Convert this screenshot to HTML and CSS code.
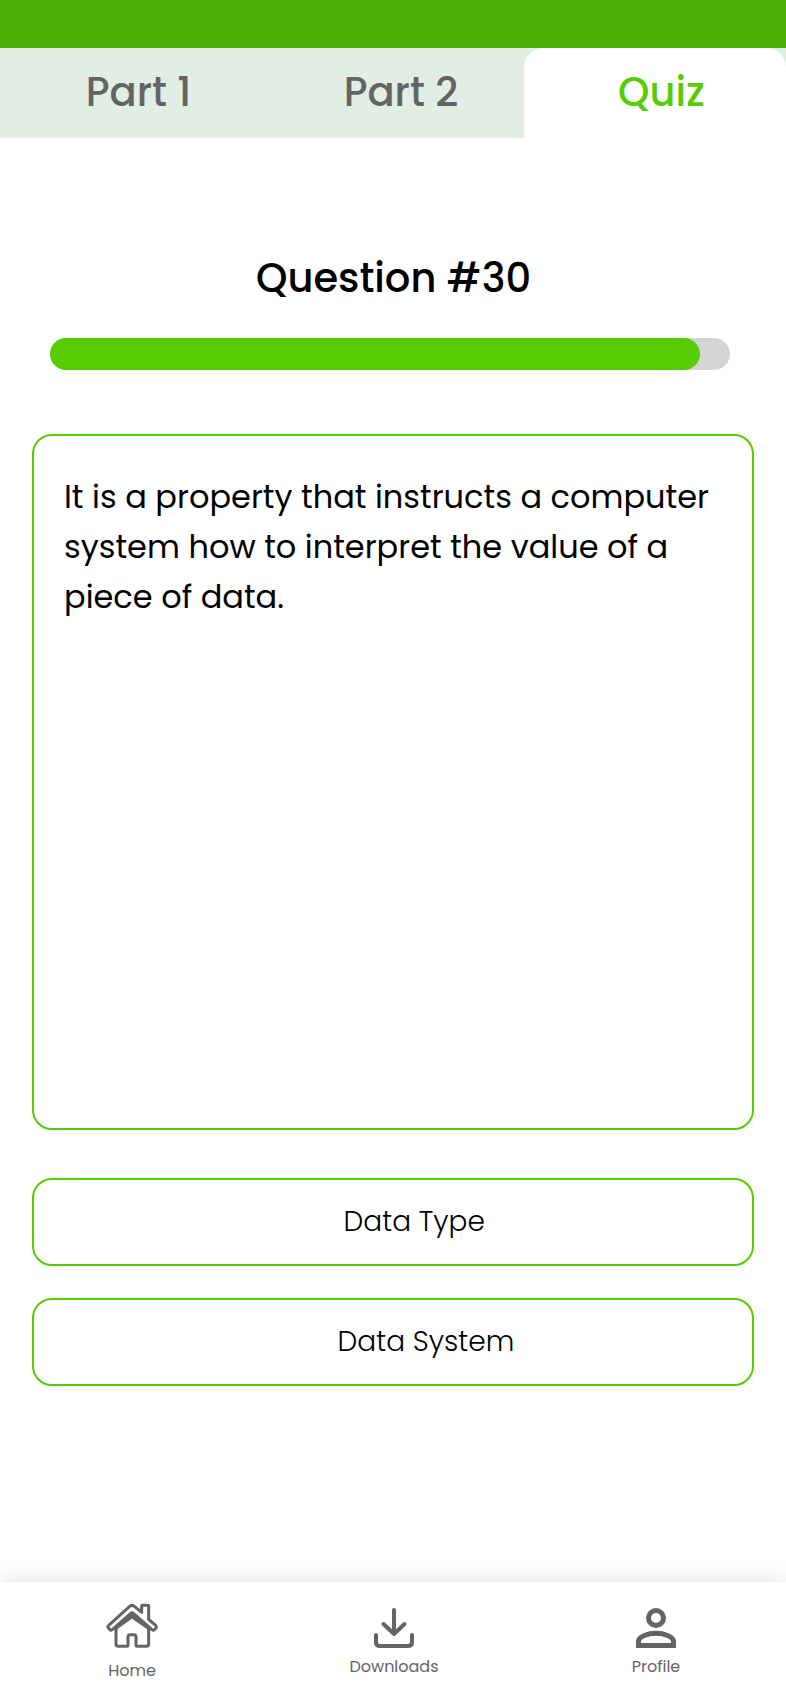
FILE: index.html
```html
<!DOCTYPE html>
<html lang="en">
<head>
<meta charset="utf-8">
<title>Quiz</title>
<link rel="stylesheet" href="styles.css">
</head>
<body>
<div class="status-bar"></div>
<nav class="tabs">
  <a class="tab part1">Part 1</a>
  <a class="tab part2">Part 2</a>
  <a class="tab active">Quiz</a>
</nav>
<main class="content">
  <h1 class="title">Question #30</h1>
  <div class="progress"><div class="progress-fill" style="width: 650px"></div></div>
  <section class="card">
    <p class="question">It is a property that instructs a computer system how to interpret the value of a piece of data.</p>
  </section>
  <div class="options">
    <button class="option type">Data Type</button>
    <button class="option system">Data System</button>
  </div>
</main>
<footer class="bottom-nav">
  <a class="nav-item home">
    <svg class="icon-home" viewBox="48 100 156 136" fill="none" stroke="currentColor" stroke-width="9" stroke-linejoin="round" stroke-linecap="round">
      <path d="M56 167 119 110Q126 104 133 110L155 128V109Q155 107 158 107H173Q176 107 176 109V149L197 167Q201 171 197 176L194 180Q190 183 186 180L130 131Q126 128 122 131L67 180Q63 183 59 179L56 176Q51 171 56 167Z"/>
      <path fill="currentColor" d="M76 177 126 133 177 177 126 141Z"/>
      <path d="M78 178V223Q78 230 86 230H108Q114 230 114 225V201Q114 195 120 195H132Q138 195 138 201V225Q138 230 144 230H168Q176 230 176 223V178"/>
    </svg>
    <span>Home</span>
  </a>
  <a class="nav-item">
    <svg class="icon" viewBox="0 0 40 40" fill="none" stroke="currentColor" stroke-width="4" stroke-linecap="round" stroke-linejoin="round">
      <path d="M20 2V26M9.500 16 20 26 30.500 16M2 27V34Q2 38 6 38H34Q38 38 38 34V27"/>
    </svg>
    <span>Downloads</span>
  </a>
  <a class="nav-item">
    <svg class="icon" viewBox="0 0 40 40" fill="none" stroke="currentColor" stroke-width="5">
      <circle cx="20" cy="10" r="7.500"/>
      <path d="M2.500 37.500V33.500C2.500 28.500 12 25.300 20 25.300S37.500 28.500 37.500 33.500V37.500Z"/>
    </svg>
    <span>Profile</span>
  </a>
</footer>
</body>
</html>
```
FILE: styles.css
```css
* { box-sizing: border-box; }
body {
  margin: 0;
  height: 1702px;
  display: flex;
  flex-direction: column;
  overflow: hidden;
  background: #fff;
  color: #000;
  font-family: Poppins, Inter, sans-serif;
}
.status-bar { height: 48px; background: #4bae04; }
.tabs { display: flex; height: 90px; background: #e2ede3; color: #646464; }
.tab {
  width: 262px;
  text-align: center;
  font-size: 40px;
  font-weight: 500;
  line-height: 88px;
}
.part1 { padding-left: 15px; }
.part2 { padding-left: 16px; }
.tab.active {
  padding-left: 13px;
  border-radius: 20px 20px 0 0;
  background: #fff;
  color: #58cc02;
}
.content { flex: 1; padding: 0 32px; }
.title {
  margin: 110px 0 0;
  padding-left: 1px;
  height: 90px;
  text-align: center;
  font-size: 40px;
  font-weight: 500;
  line-height: 60px;
}
.progress {
  width: 680px;
  height: 32px;
  margin-left: 18px;
  border-radius: 16px;
  background: #d5d5d5;
}
.progress-fill { height: 100%; border-radius: 16px; background: #58cc02; }
.card {
  height: 696px;
  margin-top: 64px;
  padding: 36px 30px;
  border: 2px solid #58cc02;
  border-radius: 20px;
}
.question { margin: 0; font-size: 32px; line-height: 50px; }
.options { display: flex; flex-direction: column; gap: 32px; margin-top: 48px; }
.option {
  height: 88px;
  padding: 0;
  border: 2px solid #58cc02;
  border-radius: 20px;
  background: #fff;
  color: #000;
  font: inherit;
  font-size: 28px;
  font-weight: 300;
  text-align: left;
}
.type { padding-left: 309.5px; }
.system { padding-left: 303.5px; }
.bottom-nav {
  display: flex;
  height: 120px;
  background: #fff;
  color: #646464;
  box-shadow: 0 0 20px rgba(0, 0, 0, 0.14);
}
.nav-item {
  width: 262px;
  padding-left: 2px;
  display: flex;
  flex-direction: column;
  align-items: center;
  font-size: 16px;
  line-height: 24px;
}
.icon { width: 40px; height: 40px; margin: 26px 0 7px; }
.icon-home { width: 52px; height: 45.330px; margin: 21.330px 0 10.330px; }
```
